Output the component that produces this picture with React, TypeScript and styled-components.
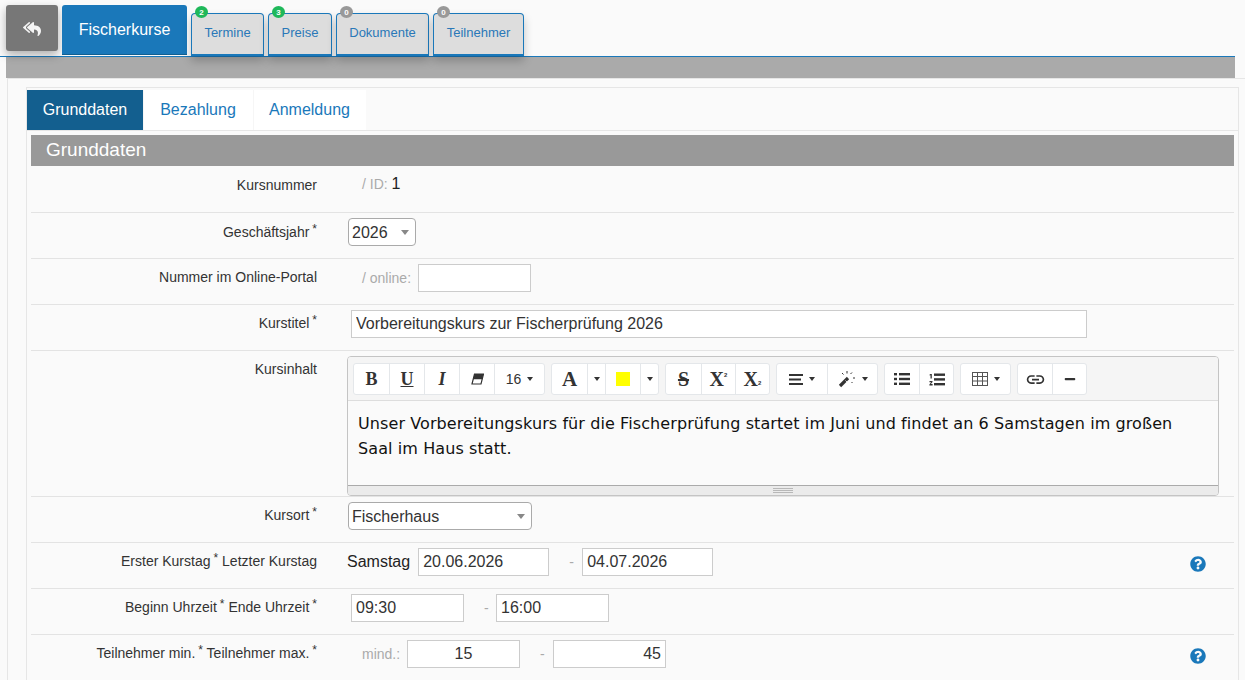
import React from "react";
import styled, { createGlobalStyle } from "styled-components";
import { FaMinus, FaQuestionCircle, FaReplyAll } from "react-icons/fa";
import { MdLink } from "react-icons/md";

const GlobalStyle = createGlobalStyle`
  html, body {
    margin: 0;
    padding: 0;
    height: 680px;
    overflow: hidden;
    background: #fafafa;
    font-family: "Liberation Sans", Arial, sans-serif;
    color: #333;
  }
  * { box-sizing: border-box; }
`;

const TopBar = styled.div`
  position: relative;
  z-index: 1;
  display: flex;
  align-items: flex-end;
  width: 1235px;
  height: 57px;
  padding-left: 6px;
  border-bottom: 1px solid #1a78ba;
`;

const BackButton = styled.div`
  width: 52px;
  height: 46px;
  margin-bottom: 5px;
  margin-right: 4px;
  padding-top: 1px;
  border-radius: 3px;
  background: #777;
  color: #f4f4f4;
  display: flex;
  align-items: center;
  justify-content: center;
  box-shadow: 0 4px 10px rgba(0, 0, 0, 0.3);
  font-size: 18px;
`;

const MainTab = styled.div`
  width: 125px;
  height: 50px;
  margin-bottom: 1px;
  margin-right: 4px;
  border-radius: 3px 3px 0 0;
  border-bottom: 1px solid #135f8f;
  background: #1a78ba;
  color: #fff;
  font-size: 16px;
  display: flex;
  align-items: center;
  justify-content: center;
`;

const SubTab = styled.div<{ $width: number }>`
  position: relative;
  width: ${(p) => p.$width}px;
  height: 43px;
  margin-right: 4px;
  padding-bottom: 3px;
  border: 1px solid #1a78ba;
  border-bottom: 2px solid #1a78ba;
  border-radius: 4px 4px 0 0;
  background: #ddd;
  color: #2a78b8;
  font-size: 13px;
  display: flex;
  align-items: center;
  justify-content: center;
  box-shadow: 0 5px 10px rgba(0, 0, 0, 0.22);
`;

const Badge = styled.span<{ $active?: boolean }>`
  position: absolute;
  top: -8px;
  left: 3px;
  width: 13px;
  height: 12px;
  border-radius: 50%;
  background: ${(p) => (p.$active ? "#1fb85a" : "#999")};
  color: #fff;
  font-size: 8px;
  font-weight: bold;
  display: flex;
  align-items: center;
  justify-content: center;
`;

const GrayBand = styled.div`
  width: 1229px;
  height: 21px;
  margin-left: 6px;
  background: #aaa;
`;

const Panel = styled.div`
  margin-left: 7px;
  height: 602px;
  padding: 8px 6px 0 18px;
  border-left: 1px solid #e6e6e6;
  border-top: 1px solid #e6e6e6;
`;

const InnerBox = styled.div`
  height: 594px;
  padding-top: 2px;
  border: 1px solid #e6e6e6;
  border-bottom: none;
`;

const TabStrip = styled.div`
  display: flex;
  height: 41px;
  border-bottom: 1px solid #e6e6e6;
`;

const TabItem = styled.div<{ $active?: boolean; $width: number }>`
  width: ${(p) => p.$width}px;
  height: 40px;
  background: ${(p) => (p.$active ? "#135f8f" : "#fff")};
  color: ${(p) => (p.$active ? "#fff" : "#1a78ba")};
  font-size: 16px;
  display: flex;
  align-items: center;
  justify-content: center;

  & + & {
    box-shadow: inset 1px 0 #f6f6f6;
  }
`;

const FormBox = styled.div`
  padding: 4px 4px 0 4px;
`;

const SectionHead = styled.div`
  height: 31px;
  background: #999;
  color: #fff;
  font-size: 19px;
  line-height: 30px;
  padding-left: 15px;
`;

const Row = styled.div<{ $height?: number }>`
  display: flex;
  height: ${(p) => p.$height ?? 46}px;
  border-bottom: 1px solid #e3e3e3;
`;

const LabelCell = styled.div<{ $top?: number }>`
  width: 286px;
  padding-top: ${(p) => p.$top ?? 11}px;
  text-align: right;
  font-size: 14px;
  line-height: 15px;
  white-space: nowrap;
  flex: none;
`;

const Star = styled.sup`
  font-size: 12px;
  line-height: 0;
  margin-left: 3px;
  vertical-align: 4px;
`;

const FieldCell = styled.div<{ $left: number; $height?: number }>`
  flex: 1;
  display: flex;
  align-items: center;
  height: ${(p) => p.$height ?? 38}px;
  padding-left: ${(p) => p.$left}px;
`;

const Hint = styled.span<{ $width?: number }>`
  color: #aaa;
  font-size: 14px;
  width: ${(p) => (p.$width ? `${p.$width}px` : "auto")};
  flex: none;
`;

const Plain = styled.span`
  color: #222;
  font-size: 16px;
`;

const DayName = styled(Plain)`
  margin-right: 8px;
`;

const TextBox = styled.input<{ $width: number; $align?: string }>`
  width: ${(p) => p.$width}px;
  height: 28px;
  border: 1px solid #ccc;
  background: #fff;
  padding: 0 4px;
  font-family: "Liberation Sans", Arial, sans-serif;
  font-size: 16px;
  color: #333;
  text-align: ${(p) => p.$align ?? "left"};
  outline: none;
  flex: none;
`;

const Dash = styled.span<{ $width: number }>`
  width: ${(p) => p.$width}px;
  padding-left: 20px;
  color: #aaa;
  font-size: 14px;
  flex: none;
`;

const SelectBox = styled.div<{ $width: number }>`
  width: ${(p) => p.$width}px;
  height: 28px;
  border: 1px solid #aaa;
  border-radius: 4px;
  background: #fff;
  padding: 1px 3px 0;
  font-size: 16px;
  display: flex;
  align-items: center;
  justify-content: space-between;
  flex: none;

  &::after {
    content: "";
    margin-right: 3px;
    border-left: 4px solid transparent;
    border-right: 4px solid transparent;
    border-top: 5px solid #888;
  }
`;

const HelpDot = styled.span`
  margin-left: auto;
  margin-right: 28px;
  margin-top: 4px;
  color: #1a78ba;
  font-size: 16px;
  display: flex;
`;

const Editor = styled.div`
  width: 872px;
  height: 140px;
  margin: 5px 0 0 30px;
  border: 1px solid #c4c4c4;
  border-radius: 4px;
  overflow: hidden;
  display: flex;
  flex-direction: column;
`;

const Toolbar = styled.div`
  height: 44px;
  flex: none;
  display: flex;
  gap: 6px;
  padding: 6px 0 0 5px;
  background: #f5f5f5;
  border-bottom: 1px solid #ddd;
`;

const ToolGroup = styled.div`
  display: flex;
  height: 32px;
  background: #fff;
  border: 1px solid #e4e7ea;
  border-radius: 3px;
`;

const ToolButton = styled.div<{ $width?: number }>`
  width: ${(p) => p.$width ?? 34}px;
  display: flex;
  align-items: center;
  justify-content: center;
  gap: 6px;
  font-size: 14px;
  color: #333;

  & + & {
    border-left: 1px solid #e4e7ea;
  }
`;

const Glyph = styled.span<{ $size?: number; $italic?: boolean; $deco?: string }>`
  font-family: "Liberation Serif", "Times New Roman", serif;
  font-weight: bold;
  font-size: ${(p) => p.$size ?? 18}px;
  font-style: ${(p) => (p.$italic ? "italic" : "normal")};
  text-decoration: ${(p) => p.$deco ?? "none"};
  color: #333;
  line-height: 1;
`;

const StrikeGlyph = styled(Glyph)`
  padding: 0 2px;
`;

const TinyMark = styled.span<{ $sub?: boolean }>`
  font-family: "Liberation Sans", Arial, sans-serif;
  font-size: 6px;
  font-weight: bold;
  align-self: ${(p) => (p.$sub ? "flex-end" : "flex-start")};
  margin-left: -6px;
  margin-top: 8px;
  margin-bottom: 8px;
`;

const Caret = styled.span`
  border-left: 3.5px solid transparent;
  border-right: 3.5px solid transparent;
  border-top: 4px solid #333;
`;

const Swatch = styled.span`
  width: 14px;
  height: 14px;
  background: #ff0;
`;

const EditorBody = styled.div`
  flex: 1;
  padding: 10px 30px 0 10px;
  background: #fafafa;
  font-family: "DejaVu Sans", Verdana, sans-serif;
  font-size: 16px;
  letter-spacing: 0.09px;
  line-height: 25px;
  color: #111;
`;

const ResizeBar = styled.div`
  height: 10px;
  flex: none;
  background: #ebebeb;
  border-top: 1px solid #aaa;
  display: flex;
  flex-direction: column;
  align-items: center;
  justify-content: center;
  gap: 1px;

  i {
    width: 20px;
    height: 1px;
    background: #b8b8b8;
  }
`;

const EraserIcon = () => (
  <svg width="13" height="12" viewBox="0 0 13 12">
    <path d="M3.5 1H12.5L10 11H1Z" fill="#fff" stroke="#333" strokeWidth="1.2" />
    <path d="M3.5 1H12.5L11.2 6.2H2.2Z" fill="#333" />
  </svg>
);

const AlignIcon = () => (
  <svg width="14" height="11" viewBox="0 0 14 11" fill="#333">
    <rect y="0" width="14" height="2" />
    <rect y="4.5" width="12" height="2" />
    <rect y="9" width="14" height="2" />
  </svg>
);

const WandIcon = () => (
  <svg width="18" height="18" viewBox="0 0 18 18" fill="none" stroke="#333">
    <path d="M2 16L10 8" strokeWidth="3.2" />
    <path d="M7.5 10.5L9.5 12.5" stroke="#fff" strokeWidth="0.8" />
    <path d="M9 1v2.5M4 3l1.5 1.5M14 2.5L12.5 4M15 8h2M13.5 12l1 1" strokeWidth="1" />
  </svg>
);

const BulletIcon = () => (
  <svg width="16" height="12" viewBox="0 0 16 12" fill="#333">
    <rect y="0" width="3" height="2.4" />
    <rect y="4.8" width="3" height="2.4" />
    <rect y="9.6" width="3" height="2.4" />
    <rect x="5" y="0" width="11" height="2.4" />
    <rect x="5" y="4.8" width="11" height="2.4" />
    <rect x="5" y="9.6" width="11" height="2.4" />
  </svg>
);

const NumberIcon = () => (
  <svg width="16" height="13" viewBox="0 0 16 13" fill="#333">
    <path d="M1.5 1H2.8V5.5H1.5V2.2L.6 2.6V1.6Z" />
    <path d="M.5 8H3.5V9L1.9 11H3.6V12.4H.4V11.4L2.1 9.3H.5Z" />
    <rect x="5" y="0.5" width="11" height="2.4" />
    <rect x="5" y="5.2" width="11" height="2.4" />
    <rect x="5" y="10" width="11" height="2.4" />
  </svg>
);

const TableIcon = () => (
  <svg width="16" height="14" viewBox="0 0 16 14" fill="none" stroke="#555" strokeWidth="1">
    <rect x="0.5" y="0.5" width="15" height="13" />
    <path d="M0 4.5h16M0 9h16M5.5 0v14M10.5 0v14" />
  </svg>
);

const App = () => (
  <>
    <GlobalStyle />
    <TopBar>
      <BackButton>
        <FaReplyAll />
      </BackButton>
      <MainTab>Fischerkurse</MainTab>
      <SubTab $width={73}>
        <Badge $active>2</Badge>Termine
      </SubTab>
      <SubTab $width={64}>
        <Badge $active>3</Badge>Preise
      </SubTab>
      <SubTab $width={93}>
        <Badge>0</Badge>Dokumente
      </SubTab>
      <SubTab $width={91}>
        <Badge>0</Badge>Teilnehmer
      </SubTab>
    </TopBar>
    <GrayBand />
    <Panel>
      <InnerBox>
        <TabStrip>
          <TabItem $active $width={116}>Grunddaten</TabItem>
          <TabItem $width={110}>Bezahlung</TabItem>
          <TabItem $width={113}>Anmeldung</TabItem>
        </TabStrip>
        <FormBox>
          <SectionHead>Grunddaten</SectionHead>
          <Row $height={47}>
            <LabelCell $top={12}>Kursnummer</LabelCell>
            <FieldCell $left={45} $height={35}>
              <Hint>/ ID:&nbsp;</Hint>
              <Plain>1</Plain>
            </FieldCell>
          </Row>
          <Row>
            <LabelCell $top={12}>
              Geschäftsjahr<Star>*</Star>
            </LabelCell>
            <FieldCell $left={31}>
              <SelectBox $width={68}>2026</SelectBox>
            </FieldCell>
          </Row>
          <Row>
            <LabelCell>Nummer im Online-Portal</LabelCell>
            <FieldCell $left={45}>
              <Hint $width={56}>/ online:</Hint>
              <TextBox $width={113} />
            </FieldCell>
          </Row>
          <Row>
            <LabelCell>
              Kurstitel<Star>*</Star>
            </LabelCell>
            <FieldCell $left={34}>
              <TextBox $width={736} defaultValue="Vorbereitungskurs zur Fischerprüfung 2026" />
            </FieldCell>
          </Row>
          <Row $height={146}>
            <LabelCell>Kursinhalt</LabelCell>
            <Editor>
              <Toolbar>
                <ToolGroup>
                  <ToolButton $width={35}><Glyph>B</Glyph></ToolButton>
                  <ToolButton $width={35}><Glyph $deco="underline">U</Glyph></ToolButton>
                  <ToolButton $width={35}><Glyph $italic>I</Glyph></ToolButton>
                  <ToolButton $width={35}><EraserIcon /></ToolButton>
                  <ToolButton $width={50}>16<Caret /></ToolButton>
                </ToolGroup>
                <ToolGroup>
                  <ToolButton $width={35}><Glyph $size={21}>A</Glyph></ToolButton>
                  <ToolButton $width={18}><Caret /></ToolButton>
                  <ToolButton $width={35}><Swatch /></ToolButton>
                  <ToolButton $width={18}><Caret /></ToolButton>
                </ToolGroup>
                <ToolGroup>
                  <ToolButton $width={35}><StrikeGlyph $size={20} $deco="line-through">S</StrikeGlyph></ToolButton>
                  <ToolButton><Glyph $size={20}>X</Glyph><TinyMark>2</TinyMark></ToolButton>
                  <ToolButton><Glyph $size={20}>X</Glyph><TinyMark $sub>2</TinyMark></ToolButton>
                </ToolGroup>
                <ToolGroup>
                  <ToolButton $width={50}><AlignIcon /><Caret /></ToolButton>
                  <ToolButton $width={50}><WandIcon /><Caret /></ToolButton>
                </ToolGroup>
                <ToolGroup>
                  <ToolButton><BulletIcon /></ToolButton>
                  <ToolButton><NumberIcon /></ToolButton>
                </ToolGroup>
                <ToolGroup>
                  <ToolButton $width={49}><TableIcon /><Caret /></ToolButton>
                </ToolGroup>
                <ToolGroup>
                  <ToolButton><MdLink size={21} /></ToolButton>
                  <ToolButton><FaMinus size={12} /></ToolButton>
                </ToolGroup>
              </Toolbar>
              <EditorBody>
                Unser Vorbereitungskurs für die Fischerprüfung startet im Juni und findet an 6 Samstagen im großen Saal im Haus statt.
              </EditorBody>
              <ResizeBar>
                <i />
                <i />
                <i />
              </ResizeBar>
            </Editor>
          </Row>
          <Row>
            <LabelCell>
              Kursort<Star>*</Star>
            </LabelCell>
            <FieldCell $left={31}>
              <SelectBox $width={184}>Fischerhaus</SelectBox>
            </FieldCell>
          </Row>
          <Row>
            <LabelCell>
              Erster Kurstag<Star>*</Star> Letzter Kurstag
            </LabelCell>
            <FieldCell $left={30}>
              <DayName>Samstag</DayName>
              <TextBox $width={131} defaultValue="20.06.2026" />
              <Dash $width={33}>-</Dash>
              <TextBox $width={131} defaultValue="04.07.2026" />
              <HelpDot><FaQuestionCircle /></HelpDot>
            </FieldCell>
          </Row>
          <Row>
            <LabelCell>
              Beginn Uhrzeit<Star>*</Star> Ende Uhrzeit<Star>*</Star>
            </LabelCell>
            <FieldCell $left={34}>
              <TextBox $width={113} defaultValue="09:30" />
              <Dash $width={32}>-</Dash>
              <TextBox $width={113} defaultValue="16:00" />
            </FieldCell>
          </Row>
          <Row>
            <LabelCell>
              Teilnehmer min.<Star>*</Star> Teilnehmer max.<Star>*</Star>
            </LabelCell>
            <FieldCell $left={45}>
              <Hint $width={45}>mind.:</Hint>
              <TextBox $width={113} $align="center" defaultValue="15" />
              <Dash $width={33}>-</Dash>
              <TextBox $width={113} $align="right" defaultValue="45" />
              <HelpDot><FaQuestionCircle /></HelpDot>
            </FieldCell>
          </Row>
        </FormBox>
      </InnerBox>
    </Panel>
  </>
);

export default App;
